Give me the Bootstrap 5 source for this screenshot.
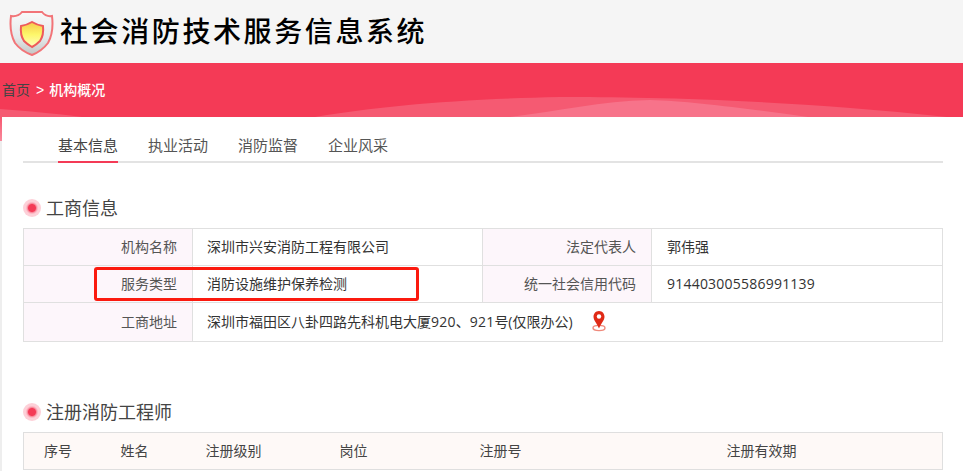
<!doctype html>
<html lang="zh">
<head>
<meta charset="utf-8">
<title>社会消防技术服务信息系统</title>
<link href="https://cdn.jsdelivr.net/npm/bootstrap@5.3.0/dist/css/bootstrap.min.css" rel="stylesheet">
<style>
html,body{height:471px;overflow:hidden}
body{background:#eee;font-family:"Open Sans","Noto Sans CJK SC","Liberation Sans",sans-serif;font-size:14px;color:#333;position:relative}
.site-head{height:63px;background:#f5f5f5;padding-left:9px;gap:5px}
.site-title{font-size:28px;font-weight:500;color:#000;letter-spacing:2.6px;margin:0;line-height:61px;font-family:"Noto Sans CJK SC",sans-serif}
.site-banner{height:54px;background:#f43a56;position:relative;overflow:hidden}
.banner-waves{position:absolute;left:0;top:0}
.crumbs{position:relative;font-size:14px;line-height:54px;color:#fff;padding-left:2px;font-weight:500;font-family:"Liberation Sans","Noto Sans CJK SC",sans-serif}
.crumbs span{color:#444;font-weight:400}
.crumbs b{font-weight:400;margin:0 5px 0 6px}
.page-sheet{margin-left:2px;background:#fff;height:354px;padding:0 20px 0 21px;position:relative}
.side-red{position:absolute;left:0;top:117px;width:2px;height:24px;background:linear-gradient(#f7566e,#f98a9c)}
.tab-row{padding:16px 0 0 35px;gap:30px;border-bottom:2px solid #e3e3e3;height:46px}
.tab-item{height:30px;color:#555;font-size:15px;line-height:25px;text-decoration:none}
.tab-item.on{border-bottom:2px solid #f43a56;color:#444}
.sect-title{font-size:18px;font-weight:400;color:#444;line-height:26px;margin:0 0 7px;gap:5px}
.dot{width:18px;height:18px;border-radius:50%;background:radial-gradient(circle,#f43a56 0 3.5px,#f98a9c 4.5px,#fbb9c4 5.5px,#fdd0d8 6.5px 9px)}
.info-tbl{table-layout:fixed;width:920px;margin:0;border-color:#e0e0e0}
.info-tbl td{padding:0 14px 2px;height:37px;vertical-align:middle;color:#333;background:#fff}
.info-tbl td.lbl{background:#fdf6fb;text-align:right;color:#555;padding-right:15px}
.info-tbl td.val-end{padding-left:15px}
.info-tbl tr.last td{height:39px}
.w-a{width:169px}.w-b{width:290px}
.num{letter-spacing:.22px}
.sec-one{margin-top:32px}
.sec-two{margin-top:57px}
.reg-tbl{table-layout:fixed;width:920px;margin:0;border-color:#dfdfdf}
.reg-tbl th{font-weight:400;background:#fef9f7;height:37px;padding:0 0 2px 20px;vertical-align:middle;color:#444}
.reg-tbl th:not(:first-child){border-left:0}
.reg-tbl th:not(:last-child){border-right:0}
.c1{width:77px}.c2{width:85px}.c3{width:134px}.c4{width:140px}.c5{width:247px}
.mark-box{position:absolute;left:94px;top:267px;width:325px;height:34px;border:3px solid #fb1a0f;border-radius:3px;pointer-events:none}
.pin{vertical-align:-5px;margin-left:18px}
</style>
</head>
<body>
<header class="site-head d-flex align-items-start">
<svg class="mt-2" width="46" height="50" viewBox="0 0 46 50" aria-hidden="true">
<defs>
<linearGradient id="outer" x1="0" y1="0" x2="0" y2="1"><stop offset="0" stop-color="#f9f9f9"/><stop offset=".6" stop-color="#e4e9ea"/><stop offset="1" stop-color="#c4c4c4"/></linearGradient>
<linearGradient id="inner" x1="0" y1="0" x2="0" y2="1"><stop offset="0" stop-color="#f6c94a"/><stop offset=".5" stop-color="#fdf76a"/><stop offset="1" stop-color="#fffdc0"/></linearGradient>
</defs>
<path d="M2 8 Q9 9 13 4 L33 4 Q37 9 43 8 Q45 24 39 35 Q33 43 23 47 Q12 43 6 35 Q0 24 2 8Z" fill="url(#outer)" stroke="#f27478" stroke-width="2"/>
<path d="M12 18 Q18 17 23 14 Q28 17 34 18 Q35 27 31 33 Q27 37 23 39 Q18 36 15 33 Q11 27 12 18Z" fill="url(#inner)" stroke="#ee5a5a" stroke-width="2"/>
</svg>
<h1 class="site-title">社会消防技术服务信息系统</h1>
</header>
<div class="site-banner">
<svg class="banner-waves" width="963" height="54" viewBox="0 0 963 54" aria-hidden="true">
<path d="M315 54 C380 43 460 36 560 34 C640 34 780 36 947 54Z" fill="#f55a72"/>
<path d="M510 54 C560 48 600 38 650 37 C690 38 750 46 808 54Z" fill="#f7738a"/>
<path d="M0 46 L0 54 L82 54 C50 50 25 48 0 46Z" fill="#f55a72"/>
</svg>
<div class="crumbs"><span>首页</span><b>&gt;</b>机构概况</div>
</div>
<div class="side-red"></div>
<main class="page-sheet">
<nav class="tab-row d-flex">
<a class="tab-item on" href="#">基本信息</a>
<a class="tab-item" href="#">执业活动</a>
<a class="tab-item" href="#">消防监督</a>
<a class="tab-item" href="#">企业风采</a>
</nav>
<section class="sec-one">
<h2 class="sect-title d-flex align-items-center"><i class="dot"></i>工商信息</h2>
<table class="table table-bordered info-tbl">
<colgroup><col class="w-a"><col class="w-b"><col class="w-a"><col></colgroup>
<tbody>
<tr><td class="lbl">机构名称</td><td>深圳市兴安消防工程有限公司</td><td class="lbl">法定代表人</td><td class="val-end">郭伟强</td></tr>
<tr><td class="lbl">服务类型</td><td>消防设施维护保养检测</td><td class="lbl">统一社会信用代码</td><td class="num val-end">914403005586991139</td></tr>
<tr class="last"><td class="lbl">工商地址</td><td colspan="3">深圳市福田区八卦四路先科机电大厦<span class="num">920</span>、<span class="num">921</span>号(仅限办公)<svg class="pin" width="16" height="22" viewBox="0 0 16 22" aria-hidden="true"><ellipse cx="8" cy="18" rx="6" ry="2.6" fill="none" stroke="#ef8a7c" stroke-width="1.4"/><path d="M8 1C4.5 1 2.5 3.8 2.5 6.8 2.5 10.4 6 13.5 8 18.5 10 13.5 13.5 10.4 13.5 6.8 13.5 3.8 11.5 1 8 1Z" fill="#e02a16"/><circle cx="8" cy="6.5" r="2.2" fill="#fff"/></svg></td></tr>
</tbody>
</table>
</section>
<section class="sec-two">
<h2 class="sect-title d-flex align-items-center"><i class="dot"></i>注册消防工程师</h2>
<table class="table table-bordered reg-tbl">
<colgroup><col class="c1"><col class="c2"><col class="c3"><col class="c4"><col class="c5"><col></colgroup>
<thead><tr><th>序号</th><th>姓名</th><th>注册级别</th><th>岗位</th><th>注册号</th><th>注册有效期</th></tr></thead>
</table>
</section>
</main>
<div class="mark-box"></div>
</body>
</html>
